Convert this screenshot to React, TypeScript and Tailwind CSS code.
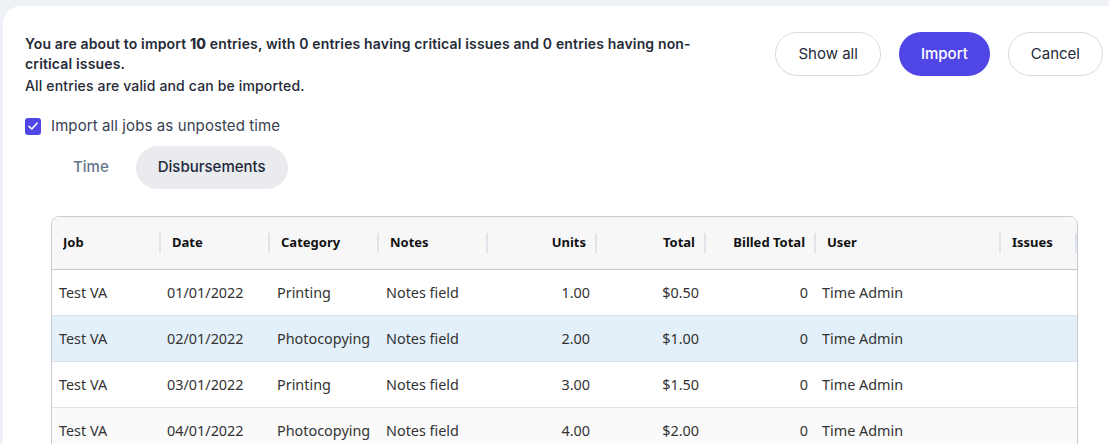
import React from 'react'

type Row = {
  job: string
  date: string
  category: string
  notes: string
  units: string
  total: string
  billed: string
  user: string
}

const rows: Row[] = [
  { job: 'Test VA', date: '01/01/2022', category: 'Printing', notes: 'Notes field', units: '1.00', total: '$0.50', billed: '0', user: 'Time Admin' },
  { job: 'Test VA', date: '02/01/2022', category: 'Photocopying', notes: 'Notes field', units: '2.00', total: '$1.00', billed: '0', user: 'Time Admin' },
  { job: 'Test VA', date: '03/01/2022', category: 'Printing', notes: 'Notes field', units: '3.00', total: '$1.50', billed: '0', user: 'Time Admin' },
  { job: 'Test VA', date: '04/01/2022', category: 'Photocopying', notes: 'Notes field', units: '4.00', total: '$2.00', billed: '0', user: 'Time Admin' },
]

const cols = 'grid grid-cols-[109px_109px_109px_109px_109px_109px_110px_185px_1fr]'

const headers: { label: string; right?: boolean }[] = [
  { label: 'Job' },
  { label: 'Date' },
  { label: 'Category' },
  { label: 'Notes' },
  { label: 'Units', right: true },
  { label: 'Total', right: true },
  { label: 'Billed Total', right: true },
  { label: 'User' },
  { label: 'Issues' },
]

function HeaderCell({ label, right }: { label: string; right?: boolean }) {
  return (
    <div className="flex items-center h-[52px] pl-[11px]">
      <span className={`flex-1 truncate ${right ? 'text-right pr-[9px]' : ''}`}>{label}</span>
      <div className="w-[2px] h-[20px] bg-[#dfe3ea] shrink-0" />
    </div>
  )
}

export default function App() {
  return (
    <div className="h-[444px] overflow-hidden bg-[#eef1f6] pl-[3px] pt-[6px]">
      <div className="bg-white rounded-tl-[18px] min-h-full pr-[4px]">
        {/* summary + actions */}
        <div className="flex justify-between pl-[22px] pt-[26px] font-['Inter',sans-serif]">
          <div className="w-[690px] pt-[2px] text-[14px] tracking-[0.15px] text-[#252b37]">
            <p className="font-semibold leading-[20px]">
              You are about to import <span className="font-extrabold">10</span> entries, with 0 entries having critical issues and 0 entries having non-critical issues.
            </p>
            <p className="font-medium leading-[20px] mt-[2px]">All entries are valid and can be imported.</p>
          </div>
          <div className="flex gap-[18px] mr-[2px]">
            <button className="h-[44px] px-[22px] rounded-full border border-[#d3dae4] text-[15px] text-[#1f2937] bg-white">
              Show all
            </button>
            <button className="h-[44px] px-[22px] rounded-full bg-[#4f46e5] text-[15px] font-medium text-white">
              Import
            </button>
            <button className="h-[44px] px-[22px] rounded-full border border-[#d3dae4] text-[15px] text-[#1f2937] bg-white">
              Cancel
            </button>
          </div>
        </div>

        {/* checkbox */}
        <label className="flex items-center gap-[10px] pl-[22px] mt-[20px] font-['Inter',sans-serif] text-[15px] leading-[20px] tracking-[0.1px] text-[#374151]">
          <span className="w-[16px] h-[17px] rounded-[3px] bg-[#4f46e5] flex items-center justify-center">
            <svg width="12" height="12" viewBox="0 0 12 12" fill="none">
              <path d="M2 6.3 L4.8 9 L10 3.2" stroke="white" strokeWidth="1.6" strokeLinecap="round" strokeLinejoin="round" />
            </svg>
          </span>
          Import all jobs as unposted time
        </label>

        {/* tabs */}
        <div className="flex gap-[5px] pl-[48px] mt-[10px] font-['Inter',sans-serif] text-[15px] font-medium">
          <button className="h-[43px] px-[22px] rounded-full text-[#64748b]">Time</button>
          <button className="h-[43px] px-[22px] rounded-full bg-[#e9ebee] text-[#1e293b]">Disbursements</button>
        </div>

        {/* table */}
        <div className="ml-[48px] mr-[27px] mt-[27px] border border-[#c7cbd3] rounded-t-[8px] overflow-hidden font-['Noto_Sans',sans-serif]">
          <div className={`${cols} bg-[#f7f7f8] border-b border-[#c4c8d0] text-[13px] font-bold text-[#111]`}>
            {headers.map((h) => (
              <HeaderCell key={h.label} label={h.label} right={h.right} />
            ))}
          </div>
          {rows.map((r, i) => (
            <div
              key={i}
              className={`${cols} h-[46px] items-center border-b border-[#dde3ea] text-[14.4px] text-[#333] ${
                i === 1 ? 'bg-[#e3eff9]' : i % 2 === 1 ? 'bg-[#fafafa]' : 'bg-white'
              }`}
            >
              <span className="px-[7px] truncate">{r.job}</span>
              <span className="px-[6px] truncate">{r.date}</span>
              <span className="px-[7px] truncate">{r.category}</span>
              <span className="px-[7px] truncate">{r.notes}</span>
              <span className="px-[7px] text-right">{r.units}</span>
              <span className="px-[7px] text-right">{r.total}</span>
              <span className="px-[8px] text-right">{r.billed}</span>
              <span className="px-[6px] truncate">{r.user}</span>
              <span className="px-[7px]" />
            </div>
          ))}
        </div>
      </div>
    </div>
  )
}
